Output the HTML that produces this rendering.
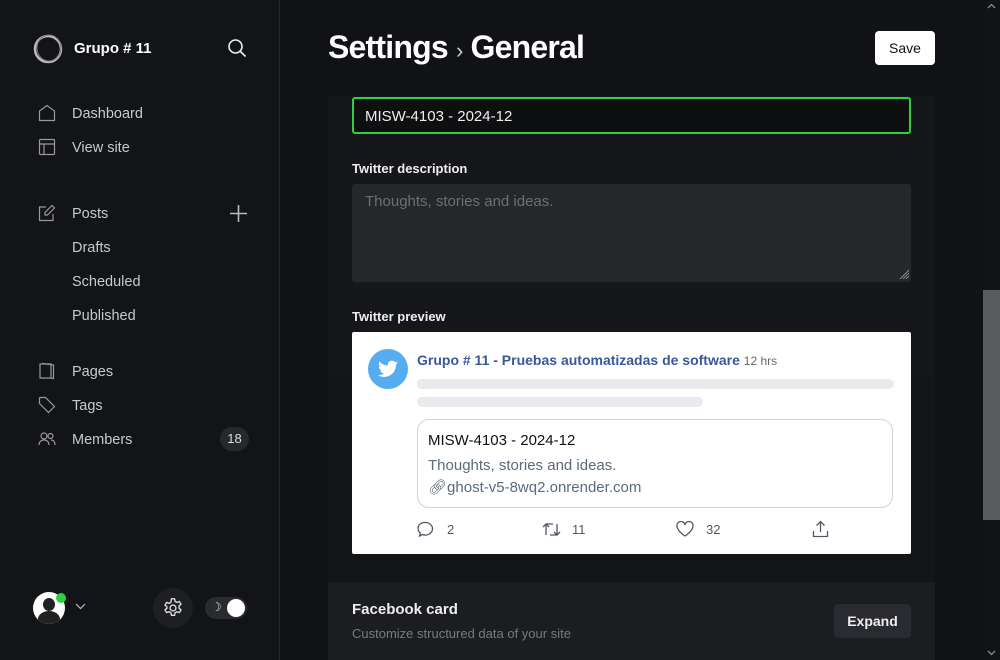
<!DOCTYPE html>
<html><head><meta charset="utf-8"><style>
*{box-sizing:border-box;margin:0;padding:0}
body{width:1000px;height:660px;overflow:hidden;background:#111216;font-family:"Liberation Sans",sans-serif;position:relative;color:#fff}
.sb{position:absolute;left:0;top:0;width:280px;height:660px;background:#131418;border-right:1px solid #24262a}
.nav{position:absolute;left:72px;font-size:14.5px;color:#c6c9cf}
.ic{position:absolute;left:38px}
.main{position:absolute;left:280px;top:0;width:703px;height:660px}
.abs{position:absolute}
</style></head><body>
<div class="sb">
 <svg class="abs" style="left:32px;top:33px" width="32" height="32" viewBox="0 0 32 32"><ellipse cx="16" cy="16" rx="13" ry="13" fill="none" stroke="#bbb" stroke-width="2.5"/><ellipse cx="17" cy="15" rx="12" ry="13" fill="none" stroke="#777" stroke-width="1"/></svg>
 <div class="abs" style="left:74px;top:40px;font-size:15px;font-weight:bold">Grupo # 11</div>
 <svg class="abs" style="left:227px;top:38px" width="20" height="20" viewBox="0 0 20 20" fill="none" stroke="#eee" stroke-width="1.6"><circle cx="8.5" cy="8.5" r="6.5"/><path d="M13.5 13.5l5 5"/></svg>
 <svg class="ic" style="top:104px" width="18" height="18" viewBox="0 0 18 18" fill="none" stroke="#999" stroke-width="1.2"><path d="M1.5 16.5V7L9 1.5 16.5 7v9.5z"/></svg>
 <div class="nav" style="top:106px">Dashboard</div>
 <svg class="ic" style="top:138px" width="18" height="18" viewBox="0 0 18 18" fill="none" stroke="#999" stroke-width="1.2"><rect x="1.5" y="1.5" width="15" height="15" rx="1"/><path d="M1.5 6h15M6 6v10.5"/></svg>
 <div class="nav" style="top:140px">View site</div>
 <svg class="ic" style="top:204px" width="18" height="18" viewBox="0 0 18 18" fill="none" stroke="#999" stroke-width="1.2"><path d="M8 3H1.5v13.5H15V10"/><path d="M14 1.5l2.5 2.5-7 7H7V8.5z"/></svg>
 <div class="nav" style="top:206px">Posts</div>
 <svg class="abs" style="left:229px;top:204px" width="19" height="19" viewBox="0 0 19 19" stroke="#bbb" stroke-width="1.6"><path d="M9.5 1v17M1 9.5h17"/></svg>
 <div class="nav" style="top:240px">Drafts</div>
 <div class="nav" style="top:274px">Scheduled</div>
 <div class="nav" style="top:308px">Published</div>
 <svg class="ic" style="top:362px" width="18" height="18" viewBox="0 0 18 18" fill="none" stroke="#999" stroke-width="1.2"><path d="M2 2h11v14H2z"/><path d="M5 2V1.5L15.5 3v13.5L13 16"/></svg>
 <div class="nav" style="top:364px">Pages</div>
 <svg class="ic" style="top:396px" width="18" height="18" viewBox="0 0 18 18" fill="none" stroke="#999" stroke-width="1.2"><path d="M1.5 2v5.5l9 9 6-6-9-9H2z"/></svg>
 <div class="nav" style="top:398px">Tags</div>
 <svg class="ic" style="top:430px" width="18" height="18" viewBox="0 0 18 18" fill="none" stroke="#999" stroke-width="1.2"><circle cx="6" cy="6" r="3"/><path d="M1 15c0-3 2-5 5-5s5 2 5 5"/><circle cx="12.5" cy="6" r="2.5"/><path d="M13 10c2.5 0 4 2 4 5"/></svg>
 <div class="nav" style="top:432px">Members</div>
 <div class="abs" style="left:220px;top:427px;width:29px;height:24px;border-radius:12px;background:#26282c;font-size:13px;color:#ddd;text-align:center;line-height:24px">18</div>
 <div class="abs" style="left:33px;top:592px;width:32px;height:32px;border-radius:50%;background:#fff;overflow:hidden"><div class="abs" style="left:10px;top:6px;width:12px;height:13px;border-radius:50%;background:#222"></div><div class="abs" style="left:5px;top:19px;width:22px;height:16px;border-radius:50%;background:#222"></div></div>
 <div class="abs" style="left:56px;top:593px;width:10px;height:10px;border-radius:50%;background:#30cf43"></div>
 <svg class="abs" style="left:75px;top:603px" width="11" height="7" viewBox="0 0 11 7" fill="none" stroke="#bbb" stroke-width="1.2"><path d="M1 1l4.5 4.5L10 1"/></svg>
 <div class="abs" style="left:153px;top:588px;width:40px;height:40px;border-radius:50%;background:#1e1f23"></div>
 <svg class="abs" style="left:162px;top:597px" width="22" height="22" viewBox="0 0 24 24" fill="none" stroke="#ddd" stroke-width="1.5"><circle cx="12" cy="12" r="3.2"/><path d="M10.3 2h3.4l.6 2.8 2 1.1 2.7-.9 1.7 2.9-2.1 1.9v2.4l2.1 1.9-1.7 2.9-2.7-.9-2 1.1-.6 2.8h-3.4l-.6-2.8-2-1.1-2.7.9-1.7-2.9 2.1-1.9V10.8L3.3 8.9 5 6l2.7.9 2-1.1z"/></svg>
 <div class="abs" style="left:205px;top:597px;width:42px;height:22px;border-radius:11px;background:#2a2b30"></div>
 <div class="abs" style="left:211px;top:600px;font-size:12px;color:#ddd">☽</div>
 <div class="abs" style="left:227px;top:599px;width:18px;height:18px;border-radius:50%;background:#fff"></div>
</div>
<div class="main">
 <div class="abs" style="left:48px;top:29px;font-size:32px;font-weight:bold;letter-spacing:-0.8px">Settings <span style="font-size:22px;font-weight:normal;color:#ccc">›</span> General</div>
 <div class="abs" style="left:595px;top:31px;width:60px;height:34px;background:#fff;border-radius:4px;color:#111;font-size:14px;text-align:center;line-height:34px">Save</div>
 <div class="abs" style="left:48px;top:96px;width:607px;height:280px;background:#16171a"></div>
 <div class="abs" style="left:48px;top:376px;width:607px;height:206px;background:#141518"></div>
 <div class="abs" style="left:72px;top:97px;width:559px;height:37px;border:2px solid #30cf43;border-radius:3px;background:#0e0f11;font-size:15px;color:#eee;padding:9px 11px">MISW-4103 - 2024-12</div>
 <div class="abs" style="left:72px;top:161px;font-size:13px;font-weight:bold;color:#eee">Twitter description</div>
 <div class="abs" style="left:72px;top:184px;width:559px;height:98px;background:#26272b;border-radius:3px;font-size:15px;color:#6c6f75;padding:9px 13px">Thoughts, stories and ideas.</div>
 <svg class="abs" style="left:619px;top:269px" width="10" height="10" viewBox="0 0 10 10" stroke="#888" stroke-width="1"><path d="M1 10L10 1M4 10l6-6M7 10l3-3"/></svg>
 <div class="abs" style="left:72px;top:309px;font-size:13px;font-weight:bold;color:#eee">Twitter preview</div>
 <div class="abs" style="left:72px;top:332px;width:559px;height:222px;background:#fff;border-radius:2px">
  <div class="abs" style="left:16px;top:17px;width:40px;height:40px;border-radius:50%;background:#55acee"></div>
  <svg class="abs" style="left:26px;top:28px" width="20" height="18" viewBox="0 0 24 20" fill="#fff"><path d="M24 2.4c-.9.4-1.8.6-2.8.8 1-.6 1.8-1.6 2.200-2.7-1 .6-2 1-3.1 1.2C19.3.7 18 0 16.6 0c-2.700 0-4.900 2.200-4.900 4.900 0 .4 0 .8.1 1.100C7.700 5.800 4.100 3.900 1.700.9c-.4.7-.7 1.600-.7 2.500 0 1.700.9 3.200 2.200 4.100-.8 0-1.600-.2-2.200-.6v.1c0 2.400 1.700 4.400 3.900 4.800-.4.1-.8.2-1.300.2-.3 0-.6 0-.9-.1.6 2 2.400 3.400 4.600 3.400-1.700 1.300-3.800 2.100-6.100 2.100-.4 0-.8 0-1.200-.1 2.200 1.400 4.800 2.200 7.500 2.200 9.100 0 14-7.500 14-14v-.6c1-.7 1.800-1.600 2.500-2.500z"/></svg>
  <div class="abs" style="left:65px;top:20px;font-size:14px;font-weight:bold;color:#38589b;white-space:nowrap">Grupo # 11 - Pruebas automatizadas de software <span style="font-weight:normal;font-size:12px;color:#666">12 hrs</span></div>
  <div class="abs" style="left:65px;top:47px;width:477px;height:10px;border-radius:5px;background:#e9eaee"></div>
  <div class="abs" style="left:65px;top:65px;width:286px;height:10px;border-radius:5px;background:#e9eaee"></div>
  <div class="abs" style="left:65px;top:87px;width:476px;height:89px;border:1px solid #cfd4da;border-radius:12px">
   <div class="abs" style="left:10px;top:12px;font-size:15px;color:#111;white-space:nowrap">MISW-4103 - 2024-12</div>
   <div class="abs" style="left:10px;top:37px;font-size:15px;color:#5b6a7c;white-space:nowrap">Thoughts, stories and ideas.</div>
   <div class="abs" style="left:10px;top:58px;font-size:15px;color:#5b6a7c;white-space:nowrap">🔗︎ghost-v5-8wq2.onrender.com</div>
  </div>
  <svg class="abs" style="left:65px;top:189px" width="17" height="17" viewBox="0 0 17 17" fill="none" stroke="#556" stroke-width="1.3"><path d="M8.5 1.5a7 6.3 0 1 1-3 12l-3 1.5.8-3A6.5 6 0 0 1 8.5 1.5z"/></svg>
  <div class="abs" style="left:95px;top:190px;font-size:13px;color:#556">2</div>
  <svg class="abs" style="left:190px;top:189px" width="19" height="17" viewBox="0 0 19 17" fill="none" stroke="#556" stroke-width="1.3"><path d="M4 14V3h7M1 6l3-3 3 3M15 3v11H8M18 11l-3 3-3-3"/></svg>
  <div class="abs" style="left:220px;top:190px;font-size:13px;color:#556">11</div>
  <svg class="abs" style="left:324px;top:189px" width="18" height="16" viewBox="0 0 18 16" fill="none" stroke="#556" stroke-width="1.3"><path d="M9 15S1 10 1 5a4 4 0 0 1 8-1 4 4 0 0 1 8 1c0 5-8 10-8 10z"/></svg>
  <div class="abs" style="left:354px;top:190px;font-size:13px;color:#556">32</div>
  <svg class="abs" style="left:460px;top:188px" width="17" height="18" viewBox="0 0 17 18" fill="none" stroke="#556" stroke-width="1.3"><path d="M8.5 12V2M4.5 5.5l4-4 4 4M1.5 11v5.5h14V11"/></svg>
 </div>
 <div class="abs" style="left:48px;top:582px;width:607px;height:78px;background:#1c1d21"></div>
 <div class="abs" style="left:72px;top:601px;font-size:15px;font-weight:bold;color:#eee">Facebook card</div>
 <div class="abs" style="left:72px;top:626px;font-size:13px;color:#777a80">Customize structured data of your site</div>
 <div class="abs" style="left:554px;top:604px;width:77px;height:34px;background:#2a2b30;border-radius:4px;font-size:14px;font-weight:bold;color:#eee;text-align:center;line-height:34px">Expand</div>
</div>
<div class="abs" style="left:983px;top:0;width:17px;height:660px;background:#121317"></div>
<div class="abs" style="left:983px;top:290px;width:17px;height:230px;background:#5a5b5e"></div>
<svg class="abs" style="left:987px;top:3px" width="9" height="6" viewBox="0 0 9 6" fill="none" stroke="#888" stroke-width="1.3"><path d="M1 5l3.5-3.5L8 5"/></svg>
<svg class="abs" style="left:987px;top:650px" width="9" height="6" viewBox="0 0 9 6" fill="none" stroke="#888" stroke-width="1.3"><path d="M1 1l3.5 3.5L8 1"/></svg>
</body></html>
